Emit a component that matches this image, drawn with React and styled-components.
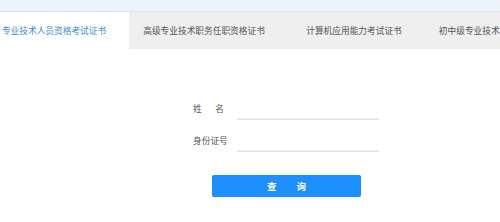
import React from "react";
import styled, { createGlobalStyle } from "styled-components";

const Global = createGlobalStyle`
  html, body { margin: 0; padding: 0; background: #fff; }
  body { font-family: "Noto Sans CJK SC", "Noto Sans", sans-serif; overflow: hidden; }
`;

const Page = styled.div`
  width: 500px;
  height: 222px;
  overflow: hidden;
  background: #fff;
`;

const TopStrip = styled.div`
  height: 11px;
  background: #ebf3fc;
  border-bottom: 1px solid #dfe3e8;
`;

const TabBar = styled.div`
  display: flex;
  height: 37px;
  margin-left: -21px;
  background: #efefef;
`;

const Tab = styled.div`
  flex: 0 0 150px;
  display: flex;
  align-items: center;
  justify-content: center;
  white-space: nowrap;
  font-size: 8.7px;
  color: ${(p) => (p.$active ? "#3f8ed6" : "#555")};
  background: ${(p) => (p.$active ? "#fff" : "#efefef")};
`;

const Form = styled.div`
  display: flex;
  flex-direction: column;
  align-items: flex-start;
  padding: 39px 0 0 193px;
`;

const Row = styled.div`
  display: flex;
  align-items: flex-end;
  height: 32px;
`;

const Label = styled.div`
  width: 44px;
  font-size: 8.7px;
  color: #555;
  padding-bottom: 5px;
  display: flex;
  justify-content: ${(p) => (p.$spread ? "space-between" : "flex-start")};
  padding-right: ${(p) => (p.$spread ? "13px" : "0")};
  box-sizing: border-box;
`;

const Input = styled.div`
  width: 142px;
  height: 18px;
  border-bottom: 1px solid #e3e3e3;
  box-shadow: 0 -5px 0 -4px #f4f4f4 inset;
`;

const Button = styled.button`
  margin: 23px 0 0 19px;
  width: 149px;
  height: 22px;
  border: none;
  border-radius: 2px;
  background: #1e8fff;
  color: #fff;
  font-family: "Noto Sans CJK SC", sans-serif;
  font-size: 9.5px;
  font-weight: bold;
  letter-spacing: 20px;
  text-indent: 20px;
  padding: 0;
`;

export default function App() {
  return (
    <Page>
      <Global />
      <TopStrip />
      <TabBar>
        <Tab $active>专业技术人员资格考试证书</Tab>
        <Tab>高级专业技术职务任职资格证书</Tab>
        <Tab>计算机应用能力考试证书</Tab>
        <Tab>初中级专业技术职务任职资格证书</Tab>
      </TabBar>
      <Form>
        <Row>
          <Label $spread>
            <span>姓</span>
            <span>名</span>
          </Label>
          <Input />
        </Row>
        <Row>
          <Label>身份证号</Label>
          <Input />
        </Row>
        <Button>查询</Button>
      </Form>
    </Page>
  );
}
